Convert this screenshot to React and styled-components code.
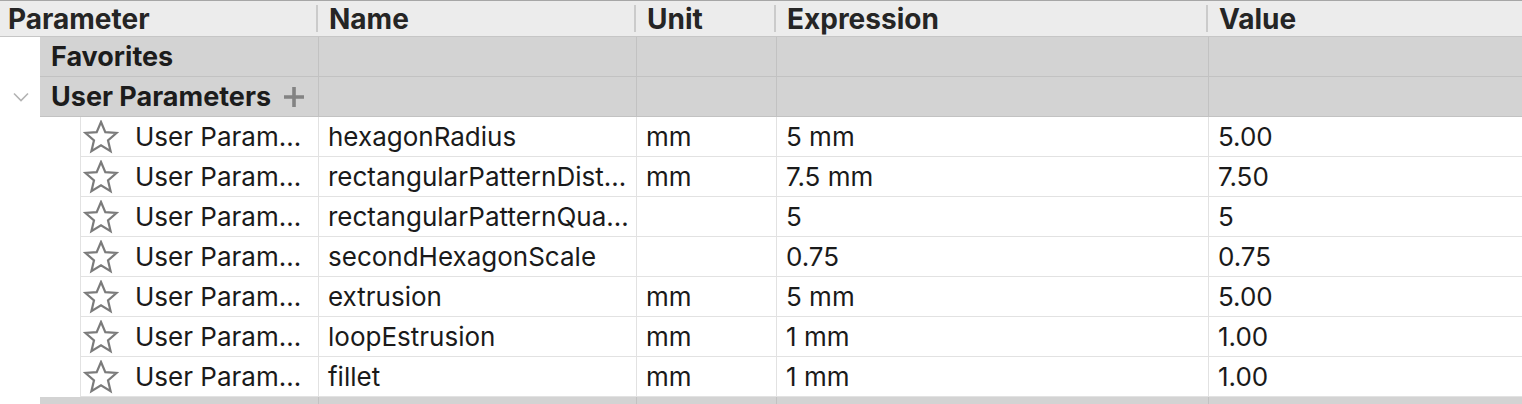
import React from "react";
import styled, { createGlobalStyle } from "styled-components";

const Global = createGlobalStyle`
  html, body { margin: 0; padding: 0; background: #ffffff; }
  body { font-family: Inter, "Noto Sans", "Liberation Sans", sans-serif; overflow: hidden; }
`;

const COLS = [319, 318, 140, 432];

const Table = styled.div`
  width: 1522px;
  display: flex;
  flex-direction: column;
  border-top: 1px solid #a6a6a6;
`;

const HeaderRow = styled.div`
  display: grid;
  grid-template-columns: ${COLS.map((c) => c + "px").join(" ")} 1fr;
  height: 35px;
  background: #ececec;
  border-bottom: 1px solid #c6c6c6;
`;

const HeaderCell = styled.div`
  position: relative;
  display: flex;
  align-items: center;
  padding-left: ${(p) => (p.$first ? 8 : 10)}px;
  font-size: 28px;
  font-weight: 700;
  color: #252525;
  letter-spacing: 0;
  &::after {
    content: "";
    display: ${(p) => (p.$last ? "none" : "block")};
    position: absolute;
    right: 1px;
    top: 4px;
    bottom: 4px;
    width: 2px;
    background: #cbcbcb;
  }
`;

const Row = styled.div`
  display: flex;
  height: 40px;
`;

const Gutter = styled.div`
  width: ${(p) => p.$w}px;
  flex: none;
  display: flex;
  align-items: center;
  padding-left: 13px;
  box-sizing: border-box;
  background: #ffffff;
`;

const Cells = styled.div`
  flex: 1;
  display: grid;
  grid-template-columns: ${(p) => COLS[0] - p.$indent}px ${COLS.slice(1).map((c) => c + "px").join(" ")} 1fr;
  background: ${(p) => (p.$group ? "#d3d3d3" : "#ffffff")};
  border-bottom: 1px solid ${(p) => (p.$group ? "#c2c2c2" : "#e2e2e2")};
  border-left: ${(p) => (p.$group ? "none" : "1px solid #e2e2e2")};
`;

const Cell = styled.div`
  display: flex;
  align-items: center;
  gap: ${(p) => p.$gap ?? 12}px;
  padding-left: ${(p) => p.$pl ?? 9}px;
  border-right: ${(p) => (p.$last ? "none" : `1px solid ${p.$group ? "#c2c2c2" : "#e2e2e2"}`)};
  font-size: ${(p) => (p.$bold ? 27 : 26)}px;
  font-weight: ${(p) => (p.$bold ? 700 : 400)};
  color: ${(p) => (p.$bold ? "#1c1c1c" : "#1a1a1a")};
  white-space: nowrap;
  overflow: hidden;
`;

const PlusIcon = () => (
  <svg width="22" height="22" viewBox="0 0 22 22" style={{ flex: "none" }}>
    <path d="M11 1 V21 M1 11 H21" stroke="#838383" strokeWidth="3.6" />
  </svg>
);

const Chevron = () => (
  <svg width="16" height="10" viewBox="0 0 16 10">
    <path d="M1 1.5 L8 8.5 L15 1.5" fill="none" stroke="#b3b3b3" strokeWidth="1.6" />
  </svg>
);

const Star = () => (
  <svg width="36" height="34" viewBox="0 0 36 34" style={{ flex: "none" }}>
    <path
      d="M18 2 L22.3 12.2 L33.5 13 L25 20.3 L27.6 31.2 L18 25.4 L8.4 31.2 L11 20.3 L2.5 13 L13.7 12.2 Z"
      fill="none"
      stroke="#7b7b7b"
      strokeWidth="2.2"
      strokeLinejoin="miter"
    />
  </svg>
);

const params = [
  ["hexagonRadius", "mm", "5 mm", "5.00"],
  ["rectangularPatternDist…", "mm", "7.5 mm", "7.50"],
  ["rectangularPatternQua…", "", "5", "5"],
  ["secondHexagonScale", "", "0.75", "0.75"],
  ["extrusion", "mm", "5 mm", "5.00"],
  ["loopEstrusion", "mm", "1 mm", "1.00"],
  ["fillet", "mm", "1 mm", "1.00"],
];

const headers = ["Parameter", "Name", "Unit", "Expression", "Value"];

function GroupRow({ label, plus, chevron }) {
  return (
    <Row>
      <Gutter $w={40}>{chevron && <Chevron />}</Gutter>
      <Cells $group $indent={40}>
        <Cell $group $bold $pl={11} $gap={12}>
          {label}
          {plus && <PlusIcon />}
        </Cell>
        <Cell $group />
        <Cell $group />
        <Cell $group />
        <Cell $group $last />
      </Cells>
    </Row>
  );
}

export default function App() {
  return (
    <>
      <Global />
      <Table>
        <HeaderRow>
          {headers.map((h, i) => (
            <HeaderCell key={h} $first={i === 0} $last={i === headers.length - 1}>
              {h}
            </HeaderCell>
          ))}
        </HeaderRow>
        <GroupRow label="Favorites" />
        <GroupRow label="User Parameters" plus chevron />
        {params.map(([name, unit, expr, val]) => (
          <Row key={name}>
            <Gutter $w={80} />
            <Cells $indent={81}>
              <Cell $pl={2} $gap={16}>
                <Star />
                User Param…
              </Cell>
              <Cell>{name}</Cell>
              <Cell>{unit}</Cell>
              <Cell>{expr}</Cell>
              <Cell $last>{val}</Cell>
            </Cells>
          </Row>
        ))}
        <GroupRow label="" />
      </Table>
    </>
  );
}
